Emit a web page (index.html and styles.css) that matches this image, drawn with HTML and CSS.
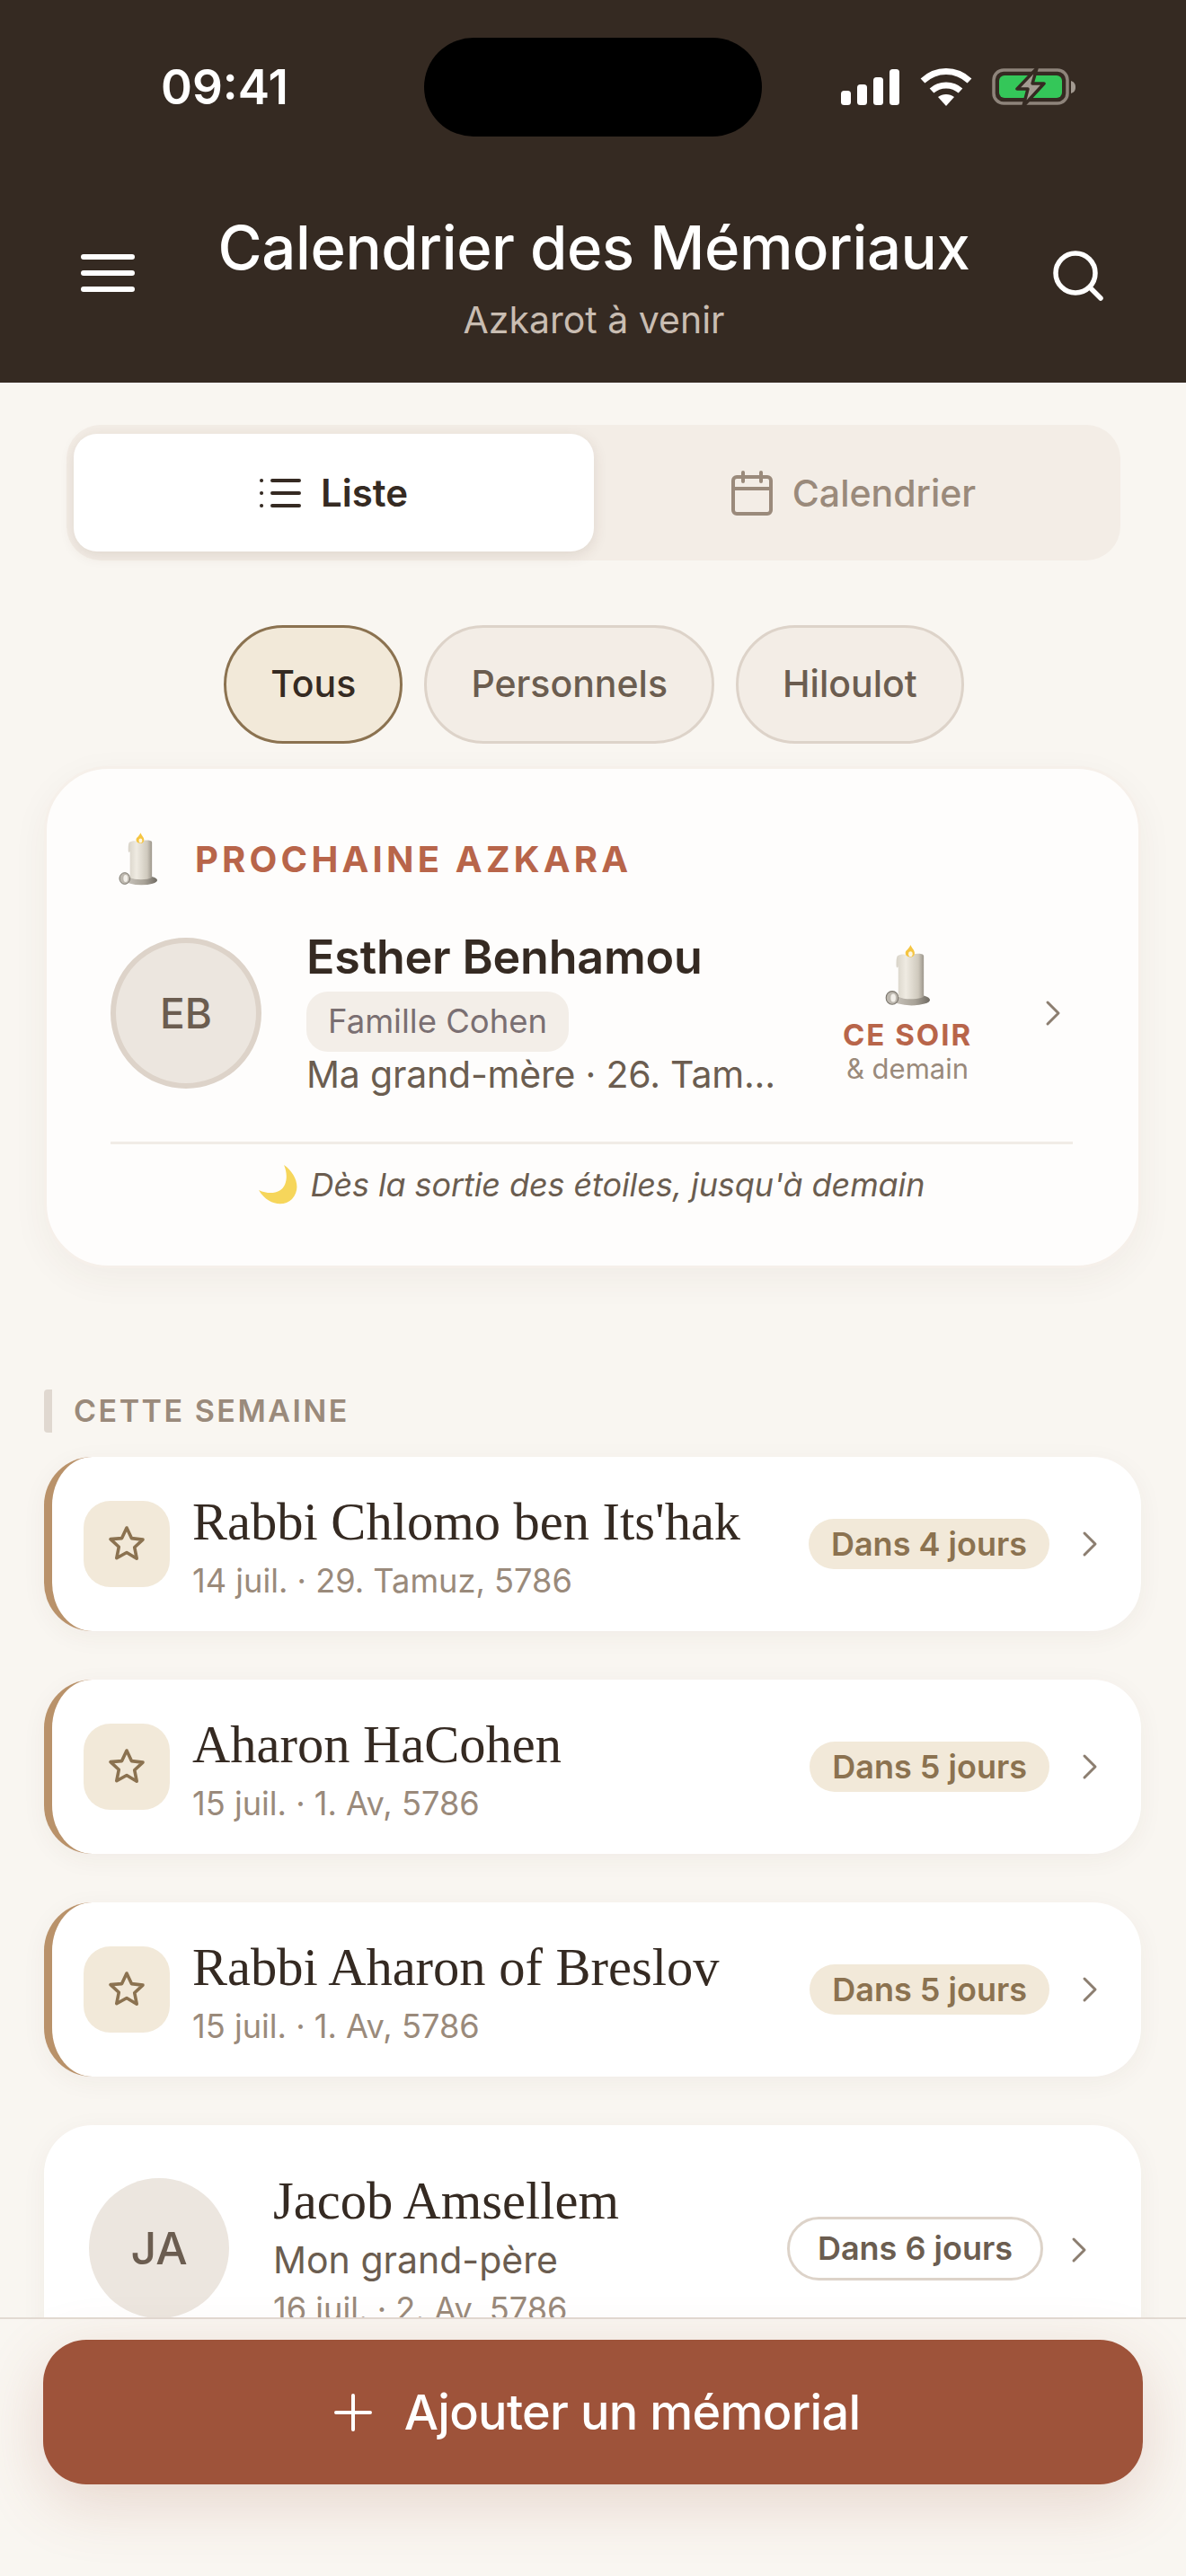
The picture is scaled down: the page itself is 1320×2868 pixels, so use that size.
FILE: index.html
```html
<!DOCTYPE html>
<html lang="fr">
<head>
<meta charset="utf-8">
<title>Calendrier des Mémoriaux</title>
<link rel="stylesheet" href="styles.css">
</head>
<body>

<svg class="defs" width="0" height="0">
	<defs>
		<linearGradient id="wax" x1="0" y1="0" x2="1" y2="0">
			<stop offset="0" stop-color="#d8d3c8"/>
			<stop offset=".35" stop-color="#efebe2"/>
			<stop offset=".8" stop-color="#cfc9bd"/>
			<stop offset="1" stop-color="#9d978c"/>
		</linearGradient>
		<linearGradient id="plate" x1="0" y1="0" x2="1" y2="0">
			<stop offset="0" stop-color="#c9c4bc"/>
			<stop offset=".6" stop-color="#a8a297"/>
			<stop offset="1" stop-color="#6f6a62"/>
		</linearGradient>
		<symbol id="candle" viewBox="0 0 44 60">
			<ellipse cx="26" cy="54" rx="18" ry="5.500" fill="url(#plate)"/>
			<ellipse cx="7" cy="52" rx="6" ry="6.500" fill="#bdb8af" stroke="#7d786f"/>
			<ellipse cx="8" cy="52" rx="2.500" ry="4" fill="#f2efe9"/>
			<path d="M12 11c3-2 7-2 11-1 4-1 9-2 13-1 1 0 2 1 2 2v40c-5 3-20 3-25 0V20c0 3-2 3-2 0 0-4 0-7 1-9z" fill="url(#wax)"/>
			<path d="M25 0c1 3 4 5 4 8s-2 4-4 4-5-1-5-4 3-3 5-8z" fill="#f5c542"/>
			<ellipse cx="25" cy="9" rx="2" ry="2.500" fill="#fdf6e3"/>
		</symbol>
		<symbol id="star" viewBox="0 0 42 42">
			<path d="M21 3l5.4 11.6 12.6 1.5-9.3 8.6 2.5 12.5L21 30.500 9.800 36.700l2.500-12.500L3 15.600l12.600-1z" fill="none" stroke="#8b7250" stroke-width="3.600" stroke-linejoin="round"/>
		</symbol>
		<symbol id="chev" viewBox="0 0 18 30">
			<path d="M3 3l12 12L3 27" fill="none" stroke="currentColor" stroke-width="3" stroke-linecap="round" stroke-linejoin="round"/>
		</symbol>
	</defs>
</svg>

<div class="phone">

	<!-- top bar -->
	<header class="top">
		<div class="status">
			<span class="time">09:41</span>
			<span class="island"></span>
			<span class="status-icons">
				<svg width="66" height="42" viewBox="0 0 66 42" fill="#fff">
					<rect x="0" y="25" width="11" height="16" rx="3.500"/>
					<rect x="18" y="18" width="11" height="23" rx="3.500"/>
					<rect x="36" y="10" width="11" height="31" rx="3.500"/>
					<rect x="54" y="1" width="11" height="40" rx="3.500"/>
				</svg>
				<svg width="58" height="44" viewBox="0 0 58 44" fill="none" stroke="#fff" stroke-width="7">
					<path d="M3 15C18 1 40 1 55 15"/>
					<path d="M13 26C22 18 36 18 45 26"/>
					<path d="M29 43L20 33C25 29 33 29 38 33z" fill="#fff" stroke="none"/>
				</svg>
				<svg width="94" height="44" viewBox="0 0 94 44">
					<rect x="2" y="3" width="82" height="37" rx="11" fill="none" stroke="#8e847b" stroke-width="3.500"/>
					<path d="M88 15c3 1 5 3 5 7s-2 6-5 7z" fill="#a39a91"/>
					<rect x="8" y="9" width="70" height="25" rx="6" fill="#34c759"/>
					<path d="M50 1L28 24h12L35 43l23-25H45z" fill="#a39a91" stroke="#352a22" stroke-width="3.500" stroke-linejoin="round"/>
				</svg>
			</span>
		</div>
		<div class="top-row">
			<svg class="hamb" width="60" height="42" viewBox="0 0 60 42" stroke="#fff" stroke-width="6" stroke-linecap="round">
				<path d="M3 3h54M3 21h54M3 39h54"/>
			</svg>
			<div class="top-title">
				<h1>Calendrier des Mémoriaux</h1>
				<p>Azkarot à venir</p>
			</div>
			<svg class="search" width="56" height="56" viewBox="0 0 56 56" fill="none" stroke="#fff" stroke-width="5.500" stroke-linecap="round">
				<circle cx="25" cy="25" r="22"/>
				<path d="M41 41l12 12"/>
			</svg>
		</div>
	</header>

	<main class="content">

		<div class="toggle">
			<div class="toggle-item on">
				<svg width="46" height="34" viewBox="0 0 46 34" stroke="#352a22" stroke-width="4" stroke-linecap="round">
					<path d="M14 3h30M14 17h30M14 31h30M2 3h.1M2 17h.1M2 31h.1"/>
				</svg>
				Liste
			</div>
			<div class="toggle-item">
				<svg width="46" height="50" viewBox="0 0 46 50" fill="none" stroke="#9a8a7b" stroke-width="4" stroke-linecap="round" stroke-linejoin="round">
					<rect x="2" y="7" width="42" height="41" rx="4"/>
					<path d="M2 20h42M13 2v10M33 2v10"/>
				</svg>
				Calendrier
			</div>
		</div>

		<div class="filters">
			<span class="filter on">Tous</span>
			<span class="filter">Personnels</span>
			<span class="filter">Hiloulot</span>
		</div>

		<section class="hero">
			<div class="hero-label">
				<svg class="candle-sm"><use href="#candle"/></svg>
				<span>PROCHAINE AZKARA</span>
			</div>
			<div class="hero-main">
				<div class="avatar big">EB</div>
				<div class="hero-info">
					<div class="hero-name">Esther Benhamou</div>
					<span class="tag">Famille Cohen</span>
					<div class="hero-rel">Ma grand-mère · 26. Tam...</div>
				</div>
				<div class="when">
					<svg class="candle-lg"><use href="#candle"/></svg>
					<div class="when-main">CE SOIR</div>
					<div class="when-sub">&amp; demain</div>
				</div>
				<svg class="chev hero-chev"><use href="#chev"/></svg>
			</div>
			<div class="hero-note">
				<svg width="44" height="44" viewBox="0 0 44 44">
					<path d="M28 0c13 9 20 26 9 38-9 9-27 7-37-10 13 6 25 3 29-6 3-7 2-15-1-22z" fill="#f6d65b"/>
				</svg>
				<em>Dès la sortie des étoiles, jusqu'à demain</em>
			</div>
		</section>

		<div class="section-title">CETTE SEMAINE</div>

		<div class="row accent">
			<div class="tile"><svg><use href="#star"/></svg></div>
			<div class="row-info">
				<div class="row-name">Rabbi Chlomo ben Its'hak</div>
				<div class="row-date">14 juil. · 29. Tamuz, 5786</div>
			</div>
			<span class="pill">Dans 4 jours</span>
			<svg class="chev"><use href="#chev"/></svg>
		</div>

		<div class="row accent">
			<div class="tile"><svg><use href="#star"/></svg></div>
			<div class="row-info">
				<div class="row-name">Aharon HaCohen</div>
				<div class="row-date">15 juil. · 1. Av, 5786</div>
			</div>
			<span class="pill">Dans 5 jours</span>
			<svg class="chev"><use href="#chev"/></svg>
		</div>

		<div class="row accent">
			<div class="tile"><svg><use href="#star"/></svg></div>
			<div class="row-info">
				<div class="row-name">Rabbi Aharon of Breslov</div>
				<div class="row-date">15 juil. · 1. Av, 5786</div>
			</div>
			<span class="pill">Dans 5 jours</span>
			<svg class="chev"><use href="#chev"/></svg>
		</div>

		<div class="row person">
			<div class="avatar">JA</div>
			<div class="row-info">
				<div class="row-name">Jacob Amsellem</div>
				<div class="row-rel">Mon grand-père</div>
				<div class="row-date">16 juil. · 2. Av, 5786</div>
			</div>
			<span class="pill outline">Dans 6 jours</span>
			<svg class="chev"><use href="#chev"/></svg>
		</div>

	</main>

	<footer class="bottom">
		<button class="add">
			<svg width="42" height="42" viewBox="0 0 42 42" stroke="#fff" stroke-width="4" stroke-linecap="round">
				<path d="M21 2v38M2 21h38"/>
			</svg>
			Ajouter un mémorial
		</button>
	</footer>

</div>

</body>
</html>
```

FILE: styles.css
```css
* {
	box-sizing: border-box;
}
html, body {
	margin: 0;
	padding: 0;
}
body {
	font-family: Inter, "Liberation Sans", sans-serif;
	background-color: #f9f6f1;
	color: #352a22;
}
.defs {
	position: absolute;
}
.phone {
	width: 1320px;
	height: 2868px;
	display: flex;
	flex-direction: column;
	overflow: hidden;
}

/* top bar */
.top {
	height: 426px;
	flex: none;
	background-color: #352a22;
	color: #fff;
	padding-top: 42px;
}
.status {
	display: grid;
	grid-template-columns: 472px 376px 1fr;
	height: 110px;
	align-items: center;
}
.time {
	padding-left: 179px;
	font-size: 53px;
	font-weight: 600;
}
.island {
	height: 110px;
	background-color: #000;
	border-radius: 55px;
}
.status-icons {
	display: flex;
	align-items: center;
	gap: 22px;
	padding-left: 88px;
}
.top-row {
	display: flex;
	align-items: flex-start;
	justify-content: space-between;
	padding: 0 92px 0 90px;
	margin-top: 84px;
}
.hamb {
	margin-top: 47px;
}
.search {
	margin-top: 43px;
}
.top-title {
	text-align: center;
}
.top-title h1 {
	margin: 0;
	font-size: 67px;
	line-height: 80px;
	font-weight: 500;
	letter-spacing: -.4px;
}
.top-title p {
	margin: 15px 0 0;
	font-size: 41px;
	line-height: 50px;
	color: #c9bdb2;
}

/* scrolling part */
.content {
	flex: 1;
	min-height: 0;
	overflow: hidden;
	padding: 47px 50px 0 49px;
}
.toggle {
	display: flex;
	margin: 0 23px 0 25px;
	height: 151px;
	padding: 10px 8px;
	border-radius: 38px;
	background-color: #f3ede6;
}
.toggle-item {
	flex: 1;
	display: flex;
	align-items: center;
	justify-content: center;
	gap: 22px;
	font-size: 41px;
	font-weight: 500;
	color: #9a8a7b;
	border-radius: 26px;
}
.toggle-item.on {
	flex: none;
	width: 579px;
	background-color: #fff;
	color: #352a22;
	font-weight: 600;
	font-size: 42px;
	box-shadow: 0 4px 16px rgba(80, 50, 30, .12);
}
.filters {
	display: flex;
	justify-content: center;
	gap: 24px;
	margin-top: 72px;
	padding-left: 3px;
}
.filter {
	height: 132px;
	padding: 0 49px 2px;
	display: flex;
	align-items: center;
	font-size: 41px;
	font-weight: 500;
	color: #6b5d50;
	background-color: #f3ede6;
	border: 3px solid #ddd3c9;
	border-radius: 66px;
}
.filter.on {
	color: #352a22;
	background-color: #f2e9d9;
	border-color: #8b7250;
}

/* next azkara */
.hero {
	margin-top: 25px;
	height: 559px;
	padding: 70px 73px 0 71px;
	background-color: #fefdfc;
	border: 3px solid #f6f0ea;
	border-radius: 72px;
	box-shadow: 0 12px 40px rgba(80, 50, 30, .05);
}
.hero-label {
	display: flex;
	align-items: center;
	gap: 42px;
	height: 60px;
	padding-left: 9px;
	font-size: 40px;
	font-weight: 700;
	letter-spacing: 4.200px;
	color: #b8654a;
}
.candle-sm {
	width: 43px;
	height: 59px;
}
.hero-main {
	display: flex;
	align-items: center;
	margin-top: 58px;
	height: 168px;
}
.avatar {
	flex: none;
	width: 156px;
	height: 156px;
	display: flex;
	align-items: center;
	justify-content: center;
	border-radius: 50%;
	background-color: #ece6df;
	font-size: 50px;
	font-weight: 500;
	color: #6b5d50;
}
.avatar.big {
	width: 168px;
	height: 168px;
	border: 6px solid #ddd3c9;
	font-size: 46px;
}
.hero-info {
	width: 522px;
	margin-left: 50px;
}
.hero-name {
	font-size: 52px;
	line-height: 54px;
	font-weight: 600;
	margin-top: 4px;
	letter-spacing: -.2px;
}
.tag {
	display: inline-block;
	margin-top: 11px;
	padding: 0 24px;
	height: 67px;
	line-height: 67px;
	font-size: 36.500px;
	color: #7a6f72;
	background-color: #f3eee8;
	border-radius: 24px;
}
.hero-rel {
	font-size: 41px;
	line-height: 50px;
	letter-spacing: -.2px;
	color: #6b5d50;
	white-space: nowrap;
}
.when {
	flex: none;
	width: 150px;
	margin-left: 72px;
	margin-top: 6px;
	text-align: center;
}
.candle-lg {
	display: block;
	width: 50px;
	height: 68px;
	margin: 0 auto 14px;
}
.when-main {
	font-size: 33px;
	line-height: 36px;
	font-weight: 700;
	letter-spacing: 2px;
	color: #b8654a;
}
.when-sub {
	font-size: 31px;
	line-height: 40px;
	color: #9a8a7b;
}
.chev {
	flex: none;
	width: 18px;
	height: 30px;
	color: #8c7e70;
}
.hero-chev {
	margin-left: 78px;
}
.hero-note {
	display: flex;
	align-items: center;
	justify-content: center;
	gap: 14px;
	margin-top: 59px;
	padding-top: 23px;
	border-top: 3px solid #f1ece6;
	font-size: 36px;
	letter-spacing: -.1px;
	color: #6b5d50;
}

/* list */
.section-title {
	margin-top: 135px;
	height: 48px;
	line-height: 48px;
	padding-left: 24px;
	border-left: 9px solid #e0d8d0;
	border-radius: 4px;
	font-size: 34px;
	font-weight: 600;
	letter-spacing: 2.500px;
	color: #9a8a7b;
}
.row {
	display: flex;
	align-items: center;
	height: 194px;
	margin-top: 54px;
	padding: 0 48px 0 35px;
	background-color: #fff;
	border-radius: 54px;
	box-shadow: 0 6px 28px rgba(80, 50, 30, .05);
}
.section-title + .row {
	margin-top: 27px;
}
.row.accent {
	border-left: 9px solid #b9926a;
}
.tile {
	flex: none;
	width: 96px;
	height: 96px;
	display: flex;
	align-items: center;
	justify-content: center;
	background-color: #f2e9d9;
	border-radius: 30px;
}
.tile svg {
	width: 42px;
	height: 42px;
}
.row-info {
	flex: 1;
	min-width: 0;
	margin-left: 25px;
	margin-top: 5px;
}
.row-name {
	font-family: "Liberation Serif", serif;
	font-size: 58.500px;
	line-height: 68px;
	white-space: nowrap;
}
.row-date {
	margin-top: 8px;
	font-size: 36.200px;
	line-height: 46px;
	color: #9a8a7b;
	white-space: nowrap;
}
.pill {
	flex: none;
	height: 56px;
	line-height: 56px;
	padding: 0 25px;
	font-size: 36px;
	font-weight: 600;
	color: #8b7250;
	background-color: #f2e9d9;
	border-radius: 28px;
	margin-right: 36px;
}
.row.person {
	height: 290px;
	align-items: flex-start;
	padding: 59px 60px 0 50px;
}
.row-rel {
	font-size: 41px;
	line-height: 50px;
	color: #6b5d50;
	margin-top: 4px;
}
.row.person .row-date {
	margin-top: 7px;
}
.row.person .row-info {
	margin-left: 49px;
	margin-top: -8px;
}
.row.person .row-name {
	margin-bottom: 6px;
}
.row.person .pill {
	margin-top: 43px;
	margin-right: 31px;
	padding: 0 31px;
}
.row.person .chev {
	margin-top: 65px;
}
.pill.outline {
	height: 71px;
	line-height: 65px;
	color: #6b5d50;
	background-color: #fff;
	border: 3px solid #ddd3c9;
	border-radius: 36px;
}

/* add button */
.bottom {
	flex: none;
	height: 288px;
	padding: 23px 48px 0;
	background-color: #f9f6f1;
	border-top: 2px solid #e2dad2;
	position: relative;
}
.add {
	width: 100%;
	height: 161px;
	display: flex;
	align-items: center;
	justify-content: center;
	gap: 36px;
	padding: 0 0 0 9px;
	border: 0;
	border-radius: 48px;
	background-color: #9e533a;
	color: #fff;
	font-family: inherit;
	font-size: 54px;
	font-weight: 500;
	letter-spacing: -.7px;
	box-shadow: 0 20px 70px rgba(158, 83, 58, .2);
}
```
